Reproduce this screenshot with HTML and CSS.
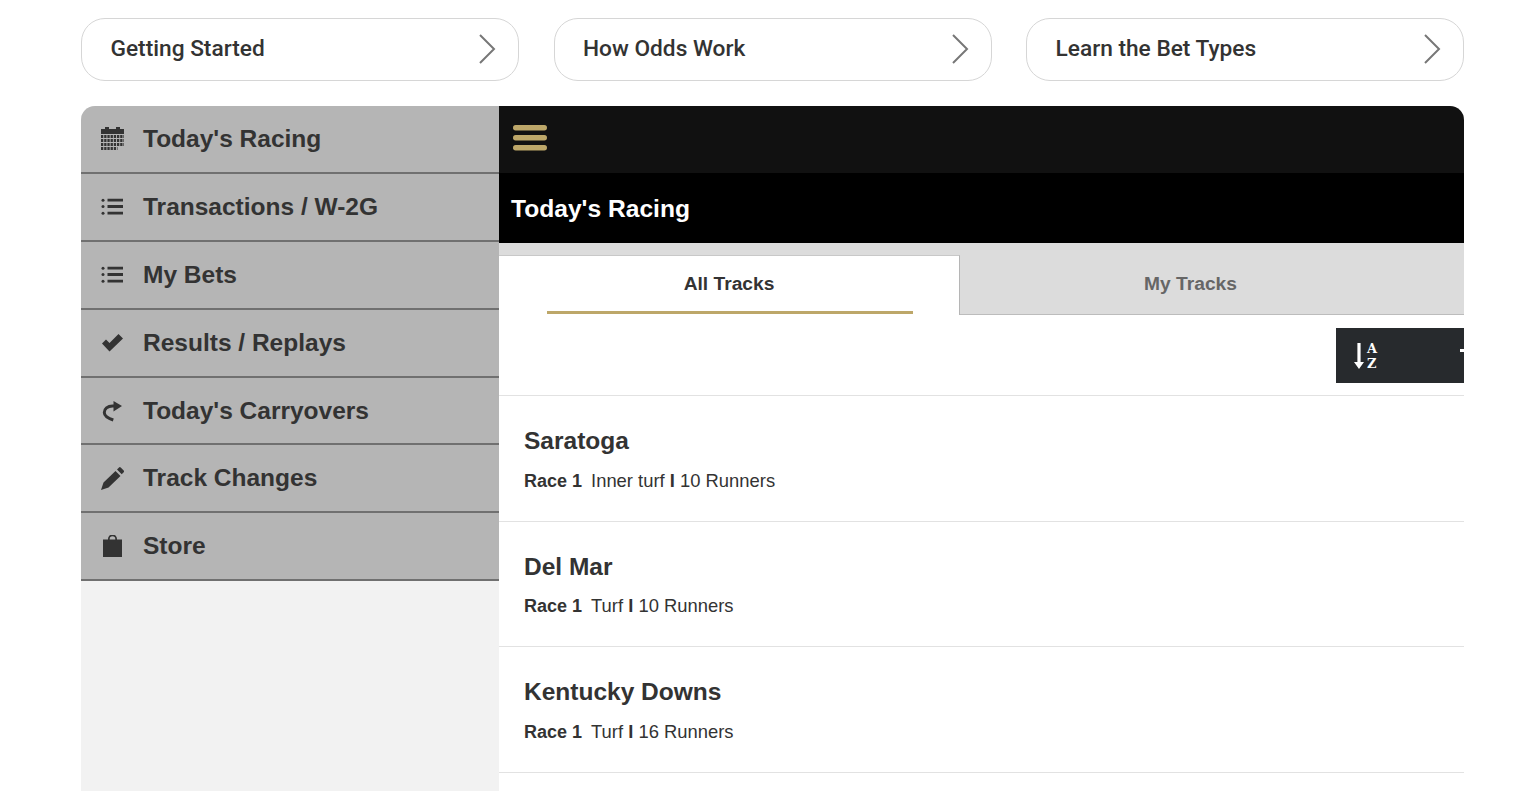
FILE: index.html
```html
<!DOCTYPE html>
<html lang="en">
<head>
<meta charset="utf-8">
<title>Today's Racing</title>
<link rel="stylesheet" href="styles.css">
</head>
<body>
<div class="page">
  <nav class="guides">
    <a class="guide"><span>Getting Started</span><svg class="chev" viewBox="0 0 18 32"><path d="M2 2l14 14L2 30"/></svg></a>
    <a class="guide"><span>How Odds Work</span><svg class="chev" viewBox="0 0 18 32"><path d="M2 2l14 14L2 30"/></svg></a>
    <a class="guide"><span>Learn the Bet Types</span><svg class="chev" viewBox="0 0 18 32"><path d="M2 2l14 14L2 30"/></svg></a>
  </nav>
  <div class="app">
    <aside class="side">
      <a class="item"><svg class="ico" viewBox="0 0 23 23"><path d="M0 2h4V0h4v2h7V0h4v2h4v5H0z"/><path class="dots" d="M0 9.500h23M0 13.500h23M0 17.500h23M0 21.500h16.500"/></svg><span>Today's Racing</span></a>
      <a class="item"><svg class="ico" viewBox="0 0 23 23"><path d="M6.500 3.800H22v2.800H6.500zM6.500 10.100H22v2.800H6.500zM6.500 16.800H22v2.800H6.500z"/><circle cx="2" cy="5.200" r="1.500"/><circle cx="2" cy="11.500" r="1.500"/><circle cx="2" cy="18.200" r="1.500"/></svg><span>Transactions / W-2G</span></a>
      <a class="item"><svg class="ico" viewBox="0 0 23 23"><path d="M6.500 3.800H22v2.800H6.500zM6.500 10.100H22v2.800H6.500zM6.500 16.800H22v2.800H6.500z"/><circle cx="2" cy="5.200" r="1.500"/><circle cx="2" cy="11.500" r="1.500"/><circle cx="2" cy="18.200" r="1.500"/></svg><span>My Bets</span></a>
      <a class="item"><svg class="ico" viewBox="0 0 23 23"><path d="M1 12.500l4-4 3.500 3.500L17.500 3l4.500 4.500L8.500 20.500z"/></svg><span>Results / Replays</span></a>
      <a class="item"><svg class="ico" viewBox="0 0 23 23"><path class="line" d="M14 7h-2.500C6.500 7 3.300 10 3.300 13.500c0 3 3 5.500 9 7.500"/><path d="M12.500 2L21 7l-8.500 5.500z"/></svg><span>Today's Carryovers</span></a>
      <a class="item"><svg class="ico" viewBox="0 0 23 23"><path d="M0 23l2.500-7.500L14.500 4l5 5L7.500 20.500zM16 2.500L18 .5a1.200 1.200 0 0 1 1.700 0l3 3a1.200 1.200 0 0 1 0 1.700l-2 2z"/></svg><span>Track Changes</span></a>
      <a class="item"><svg class="ico" viewBox="0 0 23 23"><path d="M2 4.500h5V4a4.500 4.500 0 0 1 9 0v.5h5V22H2zM8.700 4.500h5.600V4a2.800 2.800 0 0 0-5.600 0z" fill-rule="evenodd"/></svg><span>Store</span></a>
    </aside>
    <main class="main">
      <div class="topbar"><svg class="burger" viewBox="0 0 34 26"><rect y="0" width="34" height="5.500" rx="2.700"/><rect y="10" width="34" height="5.500" rx="2.700"/><rect y="20" width="34" height="5.500" rx="2.700"/></svg></div>
      <h1 class="title">Today's Racing</h1>
      <div class="tabs">
        <div class="tab active"><span class="tab-label">All Tracks</span></div>
        <div class="tab other"><span>My Tracks</span></div>
      </div>
      <div class="tools">
        <div class="sort">
          <svg class="arrow" viewBox="0 0 10 26"><path d="M3.400 0h3.200v19H10l-5 7-5-7h3.400z"/></svg>
          <span class="az"><span>A</span><span>Z</span></span>
          <span class="more"></span>
        </div>
      </div>
      <a class="race"><h2>Saratoga</h2><p><b>Race 1</b><span>Inner turf <b>I</b> 10 Runners</span></p></a>
      <a class="race"><h2>Del Mar</h2><p><b>Race 1</b><span>Turf <b>I</b> 10 Runners</span></p></a>
      <a class="race"><h2>Kentucky Downs</h2><p><b>Race 1</b><span>Turf <b>I</b> 16 Runners</span></p></a>
    </main>
  </div>
</div>
</body>
</html>
```
FILE: styles.css
```css
* { box-sizing: border-box; }
html, body { margin: 0; height: 100%; overflow: hidden; background: #fff; }
body { font-family: "Liberation Sans", Arial, sans-serif; color: #333; }
.page { padding: 18px 72px 0 81px; }
.guides { display: grid; grid-template-columns: repeat(3, 438px); column-gap: 34.500px; }
.guide { height: 63px; display: flex; align-items: center; justify-content: space-between; padding: 0 22px 2px 28.500px; border: 1.500px solid #d6d6d6; border-radius: 24px; font: 500 22.700px Roboto, sans-serif; color: #333; }
.chev { width: 18px; height: 32px; }
.chev path { fill: none; stroke: #777; stroke-width: 2; }
.app { display: flex; margin-top: 25px; height: 700px; border-radius: 14px 14px 0 0; overflow: hidden; }
.side { width: 418px; flex: none; background: #f2f2f2; }
.item { height: 67.900px; display: flex; align-items: center; padding: 0 0 0 20px; background: #b5b5b5; border-bottom: 2px solid #707070; font-size: 24.500px; font-weight: 700; color: #333; }
.ico { width: 23px; height: 23px; margin-right: 19px; flex: none; fill: #333; }
.ico .dots { fill: none; stroke: #333; stroke-width: 3; stroke-dasharray: 2.300 .9; }
.ico .line { fill: none; stroke: #333; stroke-width: 3; }
.main { flex: 1; min-width: 0; }
.topbar { height: 67px; background: #111; display: flex; align-items: center; padding: 0 0 3px 14px; }
.burger { width: 34px; height: 26px; fill: #bda769; }
.title { margin: 0; height: 70px; background: #000; color: #fff; font-size: 24.600px; font-weight: 700; display: flex; align-items: center; padding: 2px 0 0 12px; }
.tabs { display: flex; padding-top: 11.500px; height: 72px; background: linear-gradient(#dcdcdc, #dcdcdc) top / 100% 12px no-repeat, #fff; font-size: 19.200px; font-weight: 700; }
.tab { display: flex; justify-content: center; align-items: center; }
.tab.active { width: 461px; background: #fff; border-top: 1.500px solid #c8c8c8; border-right: 1.500px solid #b5b5b5; padding-bottom: 2px; position: relative; }
.tab.active::after { content: ""; position: absolute; left: 48px; right: 46px; bottom: 1px; height: 3px; background: #bda769; }
.tab.other { flex: 1; padding-right: 43px; background: #dcdcdc; color: #666; border-bottom: 1.500px solid #bcbcbc; }
.tools { height: 81px; border-bottom: 1.500px solid #e2e2e2; display: flex; justify-content: flex-end; padding-top: 13px; align-items: flex-start; }
.sort { width: 128px; height: 55px; background: #272a2d; color: #fff; display: flex; align-items: center; padding-left: 18px; gap: 3px; position: relative; }
.arrow { width: 10px; height: 26px; fill: #fff; }
.az { display: flex; flex-direction: column; font: 700 13px/15px "DejaVu Serif", serif; }
.more { position: absolute; right: 0; top: 21px; width: 4px; height: 2.500px; background: #fff; }
.race { display: block; height: 125.500px; padding: 29px 25px 0; border-bottom: 1.500px solid #e2e2e2; color: #333; }
.race h2 { margin: 0; font-size: 24.500px; line-height: 32px; font-weight: 700; }
.race p { margin: 12.500px 0 0; font-size: 18px; line-height: 22px; }
.race p > span { margin-left: 9px; font-size: 18.400px; }
```
